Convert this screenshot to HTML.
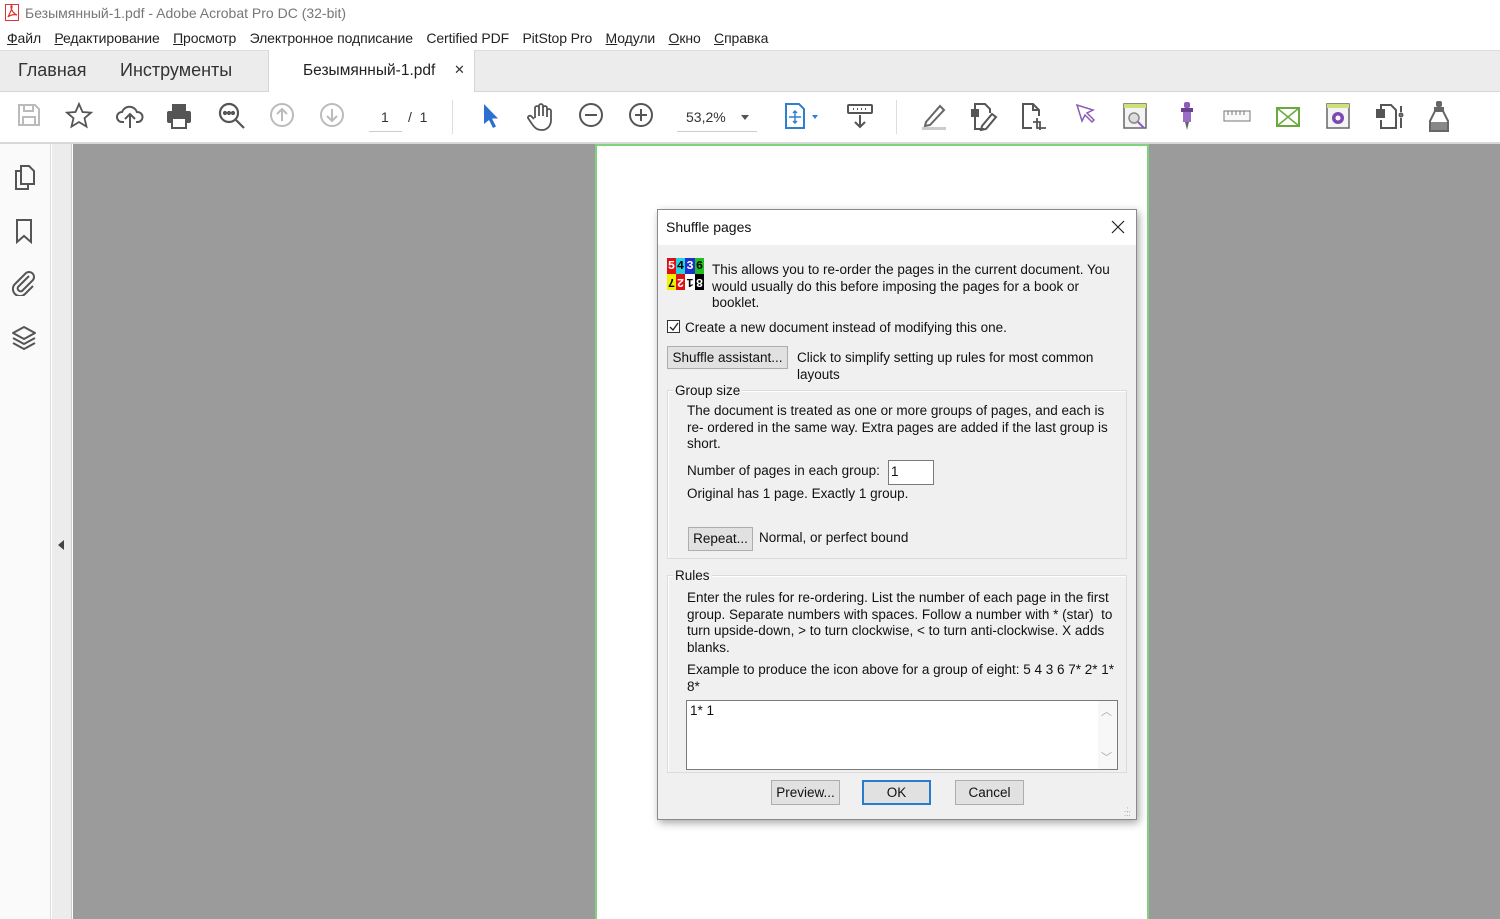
<!DOCTYPE html>
<html><head><meta charset="utf-8"><style>
*{box-sizing:border-box;margin:0;padding:0}
body{width:1500px;height:919px;overflow:hidden;position:relative;background:#fff;font-family:"Liberation Sans",Arial,sans-serif;color:#000}
.a{position:absolute}
.ui{font-family:"Liberation Sans","DejaVu Sans",sans-serif}
.menu span{margin-right:13.4px}
.menu u{text-decoration:underline}
.dlg{font-size:13.5px;line-height:16.5px;color:#111}
.btn{position:absolute;background:#e1e1e1;border:1px solid #adadad;font-size:13.5px;text-align:center;line-height:21px}
.grp{position:absolute;border:1px solid #dcdcdc;box-shadow:1px 1px 0 #fff inset}
.ic{position:absolute;top:102px}
</style></head><body>
<div class="a" style="left:0;top:0;width:1500px;height:26px;background:#fff"></div>
<svg class="a" style="left:5px;top:4px" width="14" height="17" viewBox="0 0 14 17"><rect x="0.5" y="0.5" width="13" height="16" fill="#fff" stroke="#d33"/><path d="M3 13 C5 9,7 5,7 3 C7 1,6 1,6 3 C6 6,9 10,12 11 C9 10,5 11,3 13Z" fill="none" stroke="#d33" stroke-width="1.2"/></svg>
<div class="a ui" style="left:25px;top:5px;font-size:14px;color:#777">Безымянный-1.pdf - Adobe Acrobat Pro DC (32-bit)</div>
<div class="a ui menu" style="left:7px;top:30px;font-size:14px;color:#222;white-space:nowrap;letter-spacing:-0.1px"><span><u>Ф</u>айл</span><span><u>Р</u>едактирование</span><span><u>П</u>росмотр</span><span>Электронное подписание</span><span>Certified PDF</span><span>PitStop Pro</span><span><u>М</u>одули</span><span><u>О</u>кно</span><span><u>С</u>правка</span></div>
<div class="a" style="left:0;top:50px;width:1500px;height:42px;background:#ececec;border-top:1px solid #ddd;border-bottom:1px solid #d6d6d6"></div>
<div class="a ui" style="left:18px;top:60px;font-size:18px;color:#333">Главная</div>
<div class="a ui" style="left:120px;top:60px;font-size:18px;color:#333">Инструменты</div>
<div class="a" style="left:268px;top:50px;width:207px;height:43px;background:#fff;border-left:1px solid #d6d6d6;border-right:1px solid #d6d6d6"></div>
<div class="a ui" style="left:303px;top:62px;font-size:15.5px;color:#222">Безымянный-1.pdf</div>
<div class="a ui" style="left:454px;top:62px;font-size:13px;color:#333">✕</div>
<div class="a" style="left:0;top:92px;width:1500px;height:52px;background:#fff;border-bottom:2px solid #d8d8d8"></div>
<svg class="ic" style="left:16px" width="26" height="26" viewBox="0 0 26 26" fill="none" stroke="#bbb" stroke-width="2"><path d="M3 3h16l4 4v16H3z"/><path d="M8 3v6h9V3M7 23v-8h12v8"/></svg>
<svg class="ic" style="left:65px" width="28" height="28" viewBox="0 0 28 28" fill="none" stroke="#555" stroke-width="1.8"><path d="M14 2l3.5 8 8.5.6-6.5 5.6 2 8.4L14 20l-7.5 4.6 2-8.4L2 10.6l8.5-.6z"/></svg>
<svg class="ic" style="left:116px" width="28" height="28" viewBox="0 0 28 28" fill="none" stroke="#555" stroke-width="2"><path d="M8 20H6a5 5 0 010-10 8 8 0 0115 0 5 5 0 011 10h-2M14 26V12m-5 5l5-5 5 5"/></svg>
<svg class="ic" style="left:165px" width="28" height="28" viewBox="0 0 28 28"><rect x="7" y="2" width="14" height="7" fill="#555"/><rect x="2" y="9" width="24" height="12" rx="2" fill="#555"/><rect x="7" y="16" width="14" height="10" fill="#fff" stroke="#555" stroke-width="2"/></svg>
<svg class="ic" style="left:218px" width="28" height="28" viewBox="0 0 28 28" fill="none" stroke="#555" stroke-width="2.2"><circle cx="11" cy="11" r="9"/><path d="M17.5 17.5L26 26"/><circle cx="7" cy="11" r="1" fill="#555"/><circle cx="11" cy="11" r="1" fill="#555"/><circle cx="15" cy="11" r="1" fill="#555"/></svg>
<svg class="ic" style="left:269px" width="26" height="26" viewBox="0 0 26 26" fill="none" stroke="#bbb" stroke-width="2"><circle cx="13" cy="13" r="11"/><path d="M13 19V7m-5 5l5-5 5 5"/></svg>
<svg class="ic" style="left:319px" width="26" height="26" viewBox="0 0 26 26" fill="none" stroke="#bbb" stroke-width="2"><circle cx="13" cy="13" r="11"/><path d="M13 7v12m-5-5l5 5 5-5"/></svg>
<div class="a ui" style="left:381px;top:109px;font-size:14px;color:#333">1</div>
<div class="a" style="left:369px;top:131px;width:33px;height:1px;background:#ccc"></div>
<div class="a ui" style="left:408px;top:109px;font-size:14px;color:#333">/&nbsp; 1</div>
<div class="a" style="left:452px;top:100px;width:1px;height:34px;background:#ddd"></div>
<svg class="ic" style="left:480px" width="22" height="28" viewBox="0 0 22 28"><path d="M4 2v20l5-4 4 8 3-1.5-4-8h6z" fill="#2d6fd0"/></svg>
<svg class="ic" style="left:527px" width="28" height="30" viewBox="0 0 28 30" fill="none" stroke="#555" stroke-width="1.8"><path d="M8 16V6a2 2 0 014 0v8V4a2 2 0 014 0v10V6a2 2 0 014 0v9V9a2 2 0 014 0v9c0 6-4 10-9 10s-7-2-10-6l-4-6a2 2 0 013-2l3 3"/></svg>
<svg class="ic" style="left:578px" width="26" height="26" viewBox="0 0 26 26" fill="none" stroke="#555" stroke-width="2"><circle cx="13" cy="13" r="11"/><path d="M7 13h12"/></svg>
<svg class="ic" style="left:628px" width="26" height="26" viewBox="0 0 26 26" fill="none" stroke="#555" stroke-width="2"><circle cx="13" cy="13" r="11"/><path d="M7 13h12M13 7v12"/></svg>
<div class="a ui" style="left:686px;top:109px;font-size:14px;color:#333">53,2%</div>
<div class="a" style="left:741px;top:115px;border:4px solid transparent;border-top:5px solid #555"></div>
<div class="a" style="left:677px;top:131px;width:80px;height:1px;background:#ccc"></div>
<svg class="ic" style="left:783px" width="38" height="28" viewBox="0 0 38 28" fill="none" stroke="#2d7fd0" stroke-width="2"><path d="M3 2h13l5 5v19H3z"/><path d="M12 9v12M6 15h12M10 11l2-2 2 2M10 19l2 2 2-2" stroke-width="1.4"/><path d="M29 13h6l-3 4z" fill="#2d7fd0" stroke="none"/></svg>
<svg class="ic" style="left:846px" width="28" height="28" viewBox="0 0 28 28" fill="none" stroke="#555" stroke-width="2"><rect x="2" y="3" width="24" height="8" rx="1"/><path d="M7 7h1M11 7h1M15 7h1M19 7h1M14 13v12m-5-5l5 5 5-5"/></svg>
<div class="a" style="left:896px;top:100px;width:1px;height:34px;background:#ddd"></div>
<svg class="ic" style="left:918px" width="30" height="30" viewBox="0 0 30 30"><path d="M8 20L22 4l4 4-14 15-5 1z" fill="none" stroke="#666" stroke-width="2"/><rect x="4" y="25" width="24" height="3" fill="#ccc"/></svg>
<svg class="ic" style="left:970px" width="30" height="30" viewBox="0 0 30 30" fill="none" stroke="#555" stroke-width="2"><path d="M5 8V2h10l5 5v4M5 14v8M14 27h-9v-5"/><path d="M12 24l10-12 4 3-10 12-5 1z"/><rect x="2" y="8" width="6" height="6" fill="#555"/></svg>
<svg class="ic" style="left:1020px" width="28" height="30" viewBox="0 0 28 30" fill="none" stroke="#555" stroke-width="2"><path d="M12 26H3V2h10l6 6v6M13 2v6h6"/><path d="M17 16v10h9M20 28V20h-7" stroke-width="1.8"/></svg>
<svg class="ic" style="left:1074px" width="24" height="24" viewBox="0 0 24 24"><path d="M3 3l5 16 3-6 7 7 2-2-7-7 6-3z" fill="#fff" stroke="#8a5cb8" stroke-width="1.5"/></svg>
<svg class="ic" style="left:1122px" width="28" height="28" viewBox="0 0 28 28"><rect x="2" y="2" width="22" height="24" fill="#f4f4f4" stroke="#666" stroke-width="1.5"/><rect x="2" y="2" width="22" height="4" fill="#cde07a"/><circle cx="12" cy="16" r="5" fill="#ddd" stroke="#888" stroke-width="1.5"/><path d="M16 20l6 6" stroke="#8a5cb8" stroke-width="2"/></svg>
<svg class="ic" style="left:1177px" width="20" height="30" viewBox="0 0 20 30"><rect x="7" y="0" width="6" height="6" rx="2" fill="#8a5cb8"/><rect x="4" y="6" width="12" height="4" fill="#6a4090"/><rect x="6" y="10" width="8" height="10" fill="#9a6cc8"/><path d="M8 20h4l-2 8z" fill="#666"/></svg>
<svg class="ic" style="left:1223px;top:110px" width="28" height="12" viewBox="0 0 28 12"><rect x="1" y="1" width="26" height="10" fill="#fafafa" stroke="#777"/><path d="M5 1v4M9 1v4M13 1v4M17 1v4M21 1v4" stroke="#777"/></svg>
<svg class="ic" style="left:1276px;top:107px" width="24" height="20" viewBox="0 0 24 20"><rect x="1" y="1" width="22" height="18" fill="#fff" stroke="#6aaa3a" stroke-width="2"/><path d="M1 1l22 18M23 1L1 19" stroke="#6aaa3a" stroke-width="1.5"/></svg>
<svg class="ic" style="left:1325px" width="28" height="28" viewBox="0 0 28 28"><rect x="2" y="2" width="22" height="24" fill="#f4f4f4" stroke="#666" stroke-width="1.5"/><rect x="2" y="2" width="22" height="4" fill="#cde07a"/><circle cx="13" cy="16" r="6" fill="#7a4ab0"/><circle cx="13" cy="16" r="2.5" fill="#fff"/></svg>
<svg class="ic" style="left:1375px" width="30" height="30" viewBox="0 0 30 30" fill="none" stroke="#555" stroke-width="2"><path d="M6 8V3h10l5 5v18H6v-8"/><rect x="2" y="8" width="7" height="7" fill="#555"/><path d="M26 4v6M26 16v10" /><circle cx="26" cy="13" r="1.5"/></svg>
<svg class="ic" style="left:1427px;top:100px" width="24" height="34" viewBox="0 0 24 34"><rect x="9" y="1" width="6" height="6" rx="2" fill="#666"/><rect x="7" y="7" width="10" height="4" fill="#666"/><path d="M8 11h8l5 10v10H3V21z" fill="#fff" stroke="#666" stroke-width="2"/><path d="M4 22h16v8H4z" fill="#888"/></svg>
<div class="a" style="left:0;top:144px;width:51px;height:775px;background:#fafafa;border-right:1px solid #ddd"></div>
<div class="a" style="left:52px;top:144px;width:20px;height:775px;background:#ececec;border-right:1px solid #ccc"></div>
<div class="a" style="left:58px;top:540px;border:5px solid transparent;border-right:6px solid #444;border-left:0"></div>
<svg class="a" style="left:13px;top:164px" width="24" height="28" viewBox="0 0 24 28" fill="none" stroke="#555" stroke-width="2"><path d="M8 20V2h8l5 5v13z"/><path d="M8 7H3v18h12v-5"/></svg>
<svg class="a" style="left:15px;top:218px" width="18" height="26" viewBox="0 0 18 26" fill="none" stroke="#555" stroke-width="2"><path d="M2 2h14v22l-7-6-7 6z"/></svg>
<svg class="a" style="left:11px;top:270px" width="26" height="26" viewBox="0 0 26 26" fill="none" stroke="#555" stroke-width="2"><path d="M18 6L7 17a3 3 0 004 4L22 10a5 5 0 00-7-7L4 14a7 7 0 0010 10l8-8"/></svg>
<svg class="a" style="left:11px;top:325px" width="26" height="26" viewBox="0 0 26 26" fill="none" stroke="#555" stroke-width="2" stroke-linejoin="round"><path d="M13 2l11 6-11 6-11-6z"/><path d="M2 13l11 6 11-6M2 18l11 6 11-6"/></svg>
<div class="a" style="left:73px;top:144px;width:1427px;height:775px;background:#9b9b9b"></div>
<div class="a" style="left:595px;top:144px;width:554px;height:775px;background:#fff;border:2px solid #7fd37f;border-bottom:none"></div>
<div class="a dlg" style="left:657px;top:209px;width:480px;height:611px;background:#f0f0f0;border:1px solid #8a8a8a;box-shadow:2px 3px 8px rgba(0,0,0,.35)">
  <div class="a" style="left:0;top:0;width:478px;height:35px;background:#fff"></div>
  <div class="a" style="left:8px;top:9px;font-size:14px">Shuffle pages</div>
  <svg class="a" style="left:453px;top:10px" width="14" height="14" viewBox="0 0 14 14" stroke="#222" stroke-width="1.2"><path d="M1 1l12 12M13 1L1 13"/></svg>
  <div class="a" style="left:9px;top:48px;width:37px;height:33px;font:bold 12px 'Liberation Mono',monospace;line-height:16px">
    <span class="a" style="left:0;top:0;width:9px;height:16px;background:#e01010;color:#fff;text-align:center">5</span>
    <span class="a" style="left:9px;top:0;width:9px;height:16px;background:#28d0e0;color:#000;text-align:center">4</span>
    <span class="a" style="left:18px;top:0;width:10px;height:16px;background:#1a30d0;color:#fff;text-align:center">3</span>
    <span class="a" style="left:28px;top:0;width:9px;height:16px;background:#20c020;color:#000;text-align:center">6</span>
    <span class="a" style="left:0;top:16px;width:9px;height:16px;background:#f0f000;color:#000;text-align:center;transform:rotate(180deg)">7</span>
    <span class="a" style="left:9px;top:16px;width:9px;height:16px;background:#e01010;color:#fff;text-align:center;transform:rotate(180deg)">2</span>
    <span class="a" style="left:18px;top:16px;width:10px;height:16px;background:#fff;color:#000;text-align:center;transform:rotate(180deg)">1</span>
    <span class="a" style="left:28px;top:16px;width:9px;height:16px;background:#000;color:#fff;text-align:center;transform:rotate(180deg)">8</span>
  </div>
  <div class="a" style="left:54px;top:52px;width:410px">This allows you to re-order the pages in the current document. You would usually do this before imposing the pages for a book or booklet.</div>
  <div class="a" style="left:9px;top:110px;width:13px;height:13px;border:1px solid #333;background:#fff"></div>
  <svg class="a" style="left:10px;top:111px" width="12" height="12" viewBox="0 0 12 12" fill="none" stroke="#222" stroke-width="1.3"><path d="M2 6l3 3 5-7"/></svg>
  <div class="a" style="left:27px;top:110px">Create a new document instead of modifying this one.</div>
  <div class="btn" style="left:9px;top:136px;width:121px;height:23px">Shuffle assistant...</div>
  <div class="a" style="left:139px;top:140px;width:320px">Click to simplify setting up rules for most common layouts</div>
  <div class="grp" style="left:9px;top:180px;width:460px;height:169px"></div>
  <div class="a" style="left:15px;top:173px;background:#f0f0f0;padding:0 2px">Group size</div>
  <div class="a" style="left:29px;top:193px;width:430px">The document is treated as one or more groups of pages, and each is re- ordered in the same way. Extra pages are added if the last group is short.</div>
  <div class="a" style="left:29px;top:253px">Number of pages in each group:</div>
  <div class="a" style="left:230px;top:250px;width:46px;height:25px;background:#fff;border:1px solid #7a7a7a;padding:3px 2px">1</div>
  <div class="a" style="left:29px;top:276px">Original has 1 page. Exactly 1 group.</div>
  <div class="btn" style="left:30px;top:317px;width:65px;height:24px;line-height:22px">Repeat...</div>
  <div class="a" style="left:101px;top:320px">Normal, or perfect bound</div>
  <div class="grp" style="left:9px;top:365px;width:460px;height:198px"></div>
  <div class="a" style="left:15px;top:358px;background:#f0f0f0;padding:0 2px">Rules</div>
  <div class="a" style="left:29px;top:380px;width:435px">Enter the rules for re-ordering. List the number of each page in the first group. Separate numbers with spaces. Follow a number with * (star)&nbsp; to turn upside-down, &gt; to turn clockwise, &lt; to turn anti-clockwise. X adds blanks.</div>
  <div class="a" style="left:29px;top:452px;width:435px">Example to produce the icon above for a group of eight: 5 4 3 6 7* 2* 1* 8*</div>
  <div class="a" style="left:28px;top:490px;width:432px;height:70px;background:#fff;border:1px solid #7a7a7a;padding:2px 3px">1* 1</div>
  <div class="a" style="left:440px;top:491px;width:19px;height:68px;background:#f7f7f7"></div>
  <div class="a" style="left:443px;top:494px;font-size:11px;color:#aaa">︿</div>
  <div class="a" style="left:443px;top:540px;font-size:11px;color:#aaa">﹀</div>
  <div class="btn" style="left:113px;top:570px;width:69px;height:25px;line-height:23px">Preview...</div>
  <div class="btn" style="left:204px;top:570px;width:69px;height:25px;line-height:21px;border:2px solid #2a7ad0">OK</div>
  <div class="btn" style="left:297px;top:570px;width:69px;height:25px;line-height:23px">Cancel</div>
  <div class="a" style="left:466px;top:598px;font-size:8px;color:#999;line-height:4px">.:<br>.::</div>
</div>
</body></html>
